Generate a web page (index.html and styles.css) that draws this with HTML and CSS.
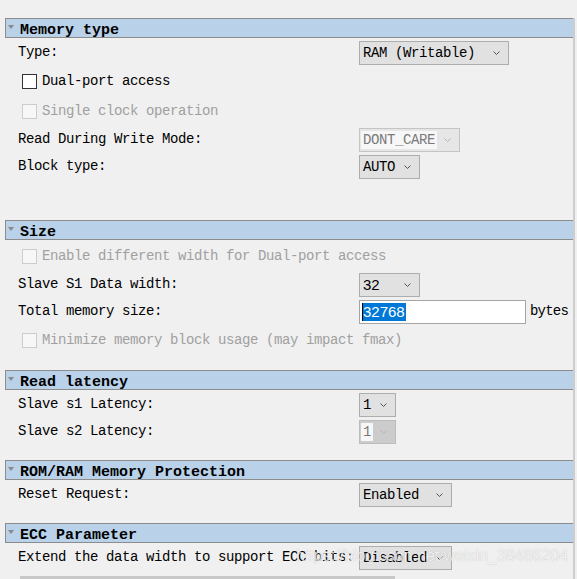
FILE: index.html
```html
<!DOCTYPE html>
<html>
<head>
<meta charset="utf-8">
<link rel="stylesheet" href="styles.css">
</head>
<body>
<div class="panel">
  <div class="hdr"><span class="tri"></span><span>Memory type</span></div>
  <div class="row"><span class="lbl">Type:</span><div class="sel w150"><span class="val">RAM (Writable)</span><svg class="chev" width="7" height="4" viewBox="0 0 7 4"><path d="M0.5 0.5 L3.5 3.5 L6.5 0.5"/></svg></div></div>
  <div class="row mt4"><span class="chk"></span><span>Dual-port access</span></div>
  <div class="row mt6 dim"><span class="chk off"></span><span>Single clock operation</span></div>
  <div class="row mt5"><span class="lbl">Read During Write Mode:</span><div class="sel dis1 w101"><span class="val hl">DONT_CARE</span><svg class="chev lt" width="7" height="4" viewBox="0 0 7 4"><path d="M0.5 0.5 L3.5 3.5 L6.5 0.5"/></svg></div></div>
  <div class="row"><span class="lbl">Block type:</span><div class="sel w61"><span class="val">AUTO</span><svg class="chev" width="7" height="4" viewBox="0 0 7 4"><path d="M0.5 0.5 L3.5 3.5 L6.5 0.5"/></svg></div></div>

  <div class="hdr gap41"><span class="tri"></span><span>Size</span></div>
  <div class="row mt4 dim"><span class="chk off"></span><span>Enable different width for Dual-port access</span></div>
  <div class="row mt5"><span class="lbl">Slave S1 Data width:</span><div class="sel w61"><span class="val sans">32</span><svg class="chev" width="7" height="4" viewBox="0 0 7 4"><path d="M0.5 0.5 L3.5 3.5 L6.5 0.5"/></svg></div></div>
  <div class="row"><span class="lbl">Total memory size:</span><div class="inp"><span class="selected">32768</span></div><span class="unit">bytes</span></div>
  <div class="row mt4 dim"><span class="chk off"></span><span>Minimize memory block usage (may impact fmax)</span></div>

  <div class="hdr gap18"><span class="tri"></span><span>Read latency</span></div>
  <div class="row"><span class="lbl">Slave s1 Latency:</span><div class="sel w37"><span class="val">1</span><svg class="chev" width="7" height="4" viewBox="0 0 7 4"><path d="M0.5 0.5 L3.5 3.5 L6.5 0.5"/></svg></div></div>
  <div class="row"><span class="lbl">Slave s2 Latency:</span><div class="sel dis2 w37"><span class="val hl">1</span><svg class="chev lt" width="7" height="4" viewBox="0 0 7 4"><path d="M0.5 0.5 L3.5 3.5 L6.5 0.5"/></svg></div></div>

  <div class="hdr gap16"><span class="tri"></span><span>ROM/RAM Memory Protection</span></div>
  <div class="row"><span class="lbl">Reset Request:</span><div class="sel w93"><span class="val">Enabled</span><svg class="chev" width="7" height="4" viewBox="0 0 7 4"><path d="M0.5 0.5 L3.5 3.5 L6.5 0.5"/></svg></div></div>

  <div class="hdr gap16"><span class="tri"></span><span>ECC Parameter</span></div>
  <div class="row"><span class="lbl">Extend the data width to support ECC bits:</span><div class="sel w93"><span class="val">Disabled</span><svg class="chev" width="7" height="4" viewBox="0 0 7 4"><path d="M0.5 0.5 L3.5 3.5 L6.5 0.5"/></svg></div></div>
</div>
<div class="hscroll"></div>
<div class="watermark">https://blog.csdn.net/weixin_38486204</div>
</body>
</html>
```

FILE: styles.css
```css
html, body {
  margin: 0;
  padding: 0;
}
body {
  background: #f0f0f0;
  width: 577px;
  height: 579px;
  overflow: hidden;
  position: relative;
  font-family: "Liberation Mono", "DejaVu Sans Mono", monospace;
  font-size: 14px;
  letter-spacing: -0.4px;
  color: #000;
}
.panel {
  margin-top: 18px;
  margin-left: 5px;
  width: 570px;
  height: 561px;
  box-sizing: border-box;
  border-right: 2px solid #cdcdcd;
}
.hdr {
  height: 20px;
  box-sizing: border-box;
  border-top: 1px solid #8c8c8c;
  border-bottom: 1px solid #8c8c8c;
  border-left: 1px solid #8c8c8c;
  background: #b9d1e9;
  display: flex;
  align-items: center;
  font-weight: bold;
  font-size: 15px;
  letter-spacing: 0;
  padding-top: 4px;
  color: #000;
}
.tri {
  align-self: flex-start;
  margin-top: 2px;
  margin-left: 2px;
  margin-right: 6px;
  width: 0;
  height: 0;
  border-left: 3px solid transparent;
  border-right: 3px solid transparent;
  border-top: 4px solid #8a8a8a;
}
.gap41 { margin-top: 41px; }
.gap18 { margin-top: 18px; }
.gap16 { margin-top: 16px; }
.row {
  display: flex;
  align-items: center;
  height: 24px;
  margin-top: 3px;
  padding-left: 13px;
  white-space: nowrap;
}
.mt4 { margin-top: 4px; }
.mt5 { margin-top: 5px; }
.mt6 { margin-top: 6px; }
.lbl {
  width: 341px;
  flex: none;
  margin-bottom: 3px;
}
.dim { color: #a0a0a0; }
.chk {
  width: 15px;
  height: 15px;
  box-sizing: border-box;
  border: 1px solid #333;
  background: #fff;
  margin-left: 4px;
  margin-right: 5px;
  flex: none;
}
.chk.off {
  border-color: #cccccc;
  background: #f7f7f7;
}
.sel {
  height: 24px;
  box-sizing: border-box;
  border: 1px solid #adadad;
  background: #e1e1e1;
  display: flex;
  align-items: center;
  padding-left: 3px;
  padding-right: 8px;
  flex: none;
}
.sel .val {
  flex: 1;
  line-height: 18px;
}
.sel .val.hl {
  flex: none;
  background: #f7f7f7;
  color: #7a7a7a;
  margin-right: auto;
  margin-left: -2px;
  padding-left: 2px;
  padding-right: 2px;
}
.sel .sans {
  font-family: "Liberation Sans", Arial, sans-serif;
  font-size: 15px;
  letter-spacing: 0;
}
.chev {
  flex: none;
  fill: none;
  stroke: #555;
  stroke-width: 1;
}
.chev.lt { stroke: #b5b5b5; }
.dis1 {
  border-color: #c4c4c4;
  background: #e6e6e6;
}
.dis2 {
  border-color: #bcbcbc;
  background: #cccccc;
}
.w150 { width: 150px; }
.w101 { width: 101px; }
.w61 { width: 61px; }
.w37 { width: 37px; }
.w93 { width: 93px; }
.inp {
  width: 167px;
  height: 24px;
  box-sizing: border-box;
  border: 1px solid #a5a5a5;
  background: #fff;
  display: flex;
  align-items: center;
  padding-left: 2px;
  flex: none;
}
.selected {
  font-family: "Liberation Sans", Arial, sans-serif;
  font-size: 15px;
  letter-spacing: 0;
  line-height: 18px;
  background: #0078d7;
  color: #fff;
  border-left: 1px solid #000;
  padding-right: 1px;
}
.unit {
  margin-left: 4px;
  letter-spacing: -0.8px;
  margin-bottom: 2px;
}
.hscroll {
  position: absolute;
  left: 20px;
  bottom: 0;
  width: 375px;
  height: 3px;
  background: #c8c8c8;
}
.watermark {
  position: absolute;
  left: 296px;
  top: 547px;
  font-family: "Liberation Sans", Arial, sans-serif;
  font-size: 16px;
  letter-spacing: 0;
  color: rgba(255, 255, 255, 0.8);
  text-shadow: 0 0 1px rgba(0, 0, 0, 0.25);
  white-space: nowrap;
}
```
